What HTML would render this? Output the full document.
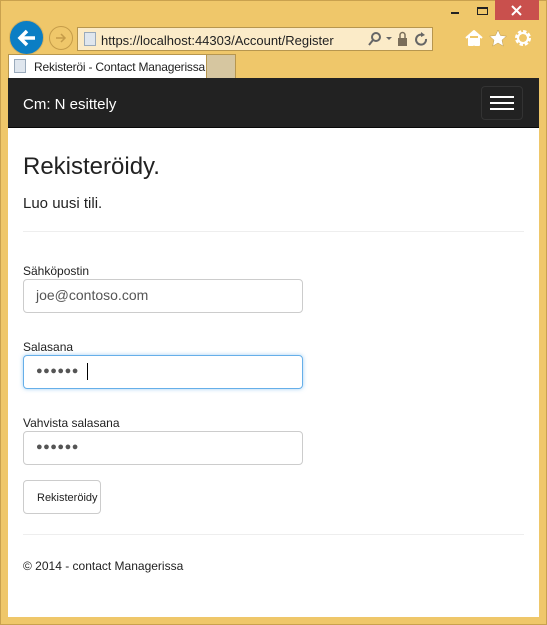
<!DOCTYPE html>
<html><head><meta charset="utf-8"><style>
*{margin:0;padding:0;box-sizing:border-box}
body{width:547px;height:625px;background:#efc76a;font-family:"Liberation Sans",sans-serif;position:relative;overflow:hidden}
.a{position:absolute}
.dots{font-size:11px;color:#555;letter-spacing:0.5px}
</style></head><body>
<div class="a" style="left:0;top:0;width:547px;height:625px;border:1px solid #c9a14e"></div>
<!-- window controls -->
<div class="a" style="left:495px;top:0;width:44px;height:20px;background:#c9504d"></div>
<svg class="a" style="left:511px;top:5px" width="11" height="11"><path d="M1 1l9 9M10 1l-9 9" stroke="#fff" stroke-width="2"/></svg>
<div class="a" style="left:451px;top:12px;width:8px;height:2px;background:#222"></div>
<div class="a" style="left:477px;top:7px;width:11px;height:8px;border:1px solid #222;border-top:2px solid #222"></div>
<!-- back/forward -->
<div class="a" style="left:9px;top:20px;width:35px;height:35px;border-radius:50%;background:#0b7ec4;border:1px solid #d9b25d"></div>
<svg class="a" style="left:15px;top:26px" width="24" height="24"><path d="M20 12H6M12 5l-7 7 7 7" stroke="#fff" stroke-width="3.5" fill="none"/></svg>
<div class="a" style="left:49px;top:26px;width:24px;height:24px;border-radius:50%;border:1px solid #c59c49"></div>
<svg class="a" style="left:53px;top:30px" width="16" height="16"><path d="M3 8h9M8 4l4 4-4 4" stroke="#c59c49" stroke-width="1.5" fill="none"/></svg>
<!-- address bar -->
<div class="a" style="left:77px;top:27px;width:356px;height:24px;background:#fbebc8;border:1px solid #b7964e"></div>
<div class="a" style="left:84px;top:32px;width:12px;height:14px;background:#dfe6ee;border:1px solid #9aaabb"></div>
<div class="a" style="left:101px;top:33px;font-size:13px;color:#222">https://localhost:44303/Account/Register</div>
<svg class="a" style="left:367px;top:31px" width="64" height="16">
<circle cx="9" cy="6" r="4" stroke="#666" stroke-width="2" fill="none"/><path d="M6 9l-4 5" stroke="#666" stroke-width="2"/>
<path d="M19 6h6l-3 3z" fill="#666"/>
<rect x="31" y="7" width="9" height="8" fill="#7a6e5a"/><path d="M33 7V4a2.5 2.5 0 0 1 5 0v3" stroke="#7a6e5a" stroke-width="1.5" fill="none"/>
<path d="M56 4a5 5 0 1 0 3 4" stroke="#666" stroke-width="2" fill="none"/><path d="M54 1l4 3-4 2z" fill="#666"/>
</svg>
<svg class="a" style="left:464px;top:28px" width="70" height="20">
<path d="M2 10l8-7 8 7M5 8v9h4v-5h2v5h4V8" stroke="#fff" stroke-width="2" fill="#fff" stroke-linejoin="round"/>
<path d="M34 2l2.5 5.5 6 .6-4.5 4 1.3 6-5.3-3.1-5.3 3.1 1.3-6-4.5-4 6-.6z" fill="#fff" stroke="#b99a55" stroke-width=".5"/>
<circle cx="59" cy="10" r="6" stroke="#fff" stroke-width="4" fill="none" stroke-dasharray="3 1.7"/><circle cx="59" cy="10" r="5" stroke="#fff" stroke-width="2" fill="none"/>
</svg>
<!-- tabs -->
<div class="a" style="left:8px;top:54px;width:199px;height:24px;background:#fff;border:1px solid #b7964e;border-bottom:none"></div>
<div class="a" style="left:14px;top:59px;width:12px;height:14px;background:#dfe6ee;border:1px solid #9aaabb"></div>
<div class="a" style="left:34px;top:60px;font-size:12px;color:#222;white-space:nowrap;letter-spacing:-0.2px">Rekisteröi - Contact Managerissa</div>
<div class="a" style="left:207px;top:54px;width:29px;height:24px;background:#d6c6a0;border:1px solid #b7964e;border-left:none;border-bottom:none"></div>
<!-- page -->
<div class="a" style="left:8px;top:78px;width:531px;height:539px;background:#fff"></div>
<div class="a" style="left:8px;top:78px;width:531px;height:50px;background:#222;border-bottom:1px solid #080808"></div>
<div class="a" style="left:23px;top:96px;font-size:15px;color:#fff">Cm: N esittely</div>
<div class="a" style="left:481px;top:86px;width:42px;height:34px;border:1px solid #333;border-radius:4px"></div>
<div class="a" style="left:490px;top:96px;width:24px;height:2px;background:#fff;box-shadow:0 6px 0 #fff,0 12px 0 #fff"></div>
<div class="a" style="left:23px;top:153px;font-size:24px;color:#222">Rekisteröidy.</div>
<div class="a" style="left:23px;top:195px;font-size:15px;color:#222">Luo uusi tili.</div>
<div class="a" style="left:23px;top:231px;width:501px;height:1px;background:#eee"></div>
<div class="a" style="left:23px;top:264px;font-size:12px;color:#222">Sähköpostin</div>
<div class="a" style="left:23px;top:279px;width:280px;height:34px;border:1px solid #ccc;border-radius:4px"></div>
<div class="a" style="left:36px;top:287px;font-size:14px;color:#555">joe@contoso.com</div>
<div class="a" style="left:23px;top:340px;font-size:12px;color:#222">Salasana</div>
<div class="a" style="left:23px;top:355px;width:280px;height:34px;border:1px solid #66afe9;border-radius:4px;box-shadow:0 0 4px rgba(102,175,233,.6)"></div>
<div class="a dots" style="left:36px;top:365px">●●●●●●</div>
<div class="a" style="left:87px;top:363px;width:1px;height:17px;background:#000"></div>
<div class="a" style="left:23px;top:416px;font-size:12px;color:#222">Vahvista salasana</div>
<div class="a" style="left:23px;top:431px;width:280px;height:34px;border:1px solid #ccc;border-radius:4px"></div>
<div class="a dots" style="left:36px;top:441px">●●●●●●</div>
<div class="a" style="left:23px;top:480px;width:78px;height:34px;border:1px solid #ccc;border-radius:4px"></div>
<div class="a" style="left:37px;top:492px;font-size:11px;color:#222">Rekisteröidy</div>
<div class="a" style="left:23px;top:534px;width:501px;height:1px;background:#eee"></div>
<div class="a" style="left:23px;top:559px;font-size:12px;color:#222">© 2014 - contact Managerissa</div>
</body></html>
